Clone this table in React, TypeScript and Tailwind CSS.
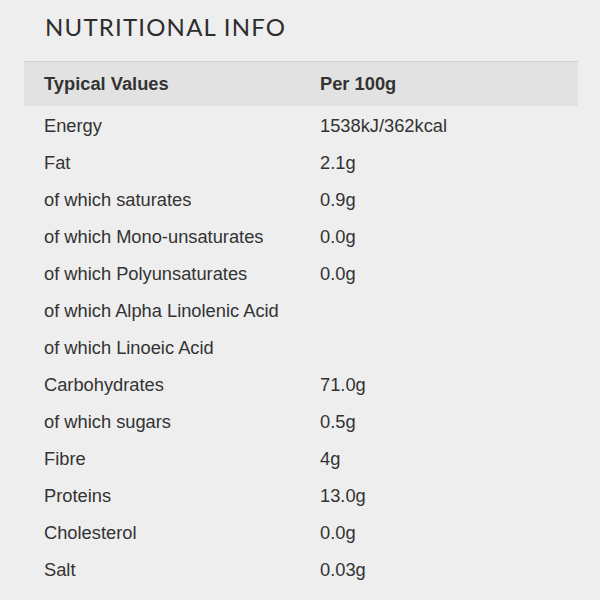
import React from "react";

const rows: [string, string][] = [
  ["Energy", "1538kJ/362kcal"],
  ["Fat", "2.1g"],
  ["of which saturates", "0.9g"],
  ["of which Mono-unsaturates", "0.0g"],
  ["of which Polyunsaturates", "0.0g"],
  ["of which Alpha Linolenic Acid", ""],
  ["of which Linoeic Acid", ""],
  ["Carbohydrates", "71.0g"],
  ["of which sugars", "0.5g"],
  ["Fibre", "4g"],
  ["Proteins", "13.0g"],
  ["Cholesterol", "0.0g"],
  ["Salt", "0.03g"],
];

export default function App() {
  return (
    <div className="w-[600px] h-[600px] bg-[#eeeeee] overflow-hidden text-[#333333]">
      <h2 className="pl-[45px] pt-[12px] h-[61px] text-[24px] leading-[30px] tracking-[1.2px] font-normal text-[#2d2d2d] font-['Lato',sans-serif]">
        NUTRITIONAL INFO
      </h2>
      <div className="ml-[24px] w-[554px] font-['Liberation_Sans',Arial,sans-serif] text-[18.3px]">
        <div className="flex h-[45px] items-center bg-[#e2e2e2] border-t border-[#d2d2d2] font-bold">
          <div className="w-[276px] pl-[20px]">Typical Values</div>
          <div className="pl-[20px]">Per 100g</div>
        </div>
        <div className="pt-[1px]">
          {rows.map(([k, v]) => (
            <div key={k} className="flex h-[37px] items-center">
              <div className="w-[276px] pl-[20px]">{k}</div>
              <div className="pl-[20px]">{v}</div>
            </div>
          ))}
        </div>
      </div>
    </div>
  );
}
